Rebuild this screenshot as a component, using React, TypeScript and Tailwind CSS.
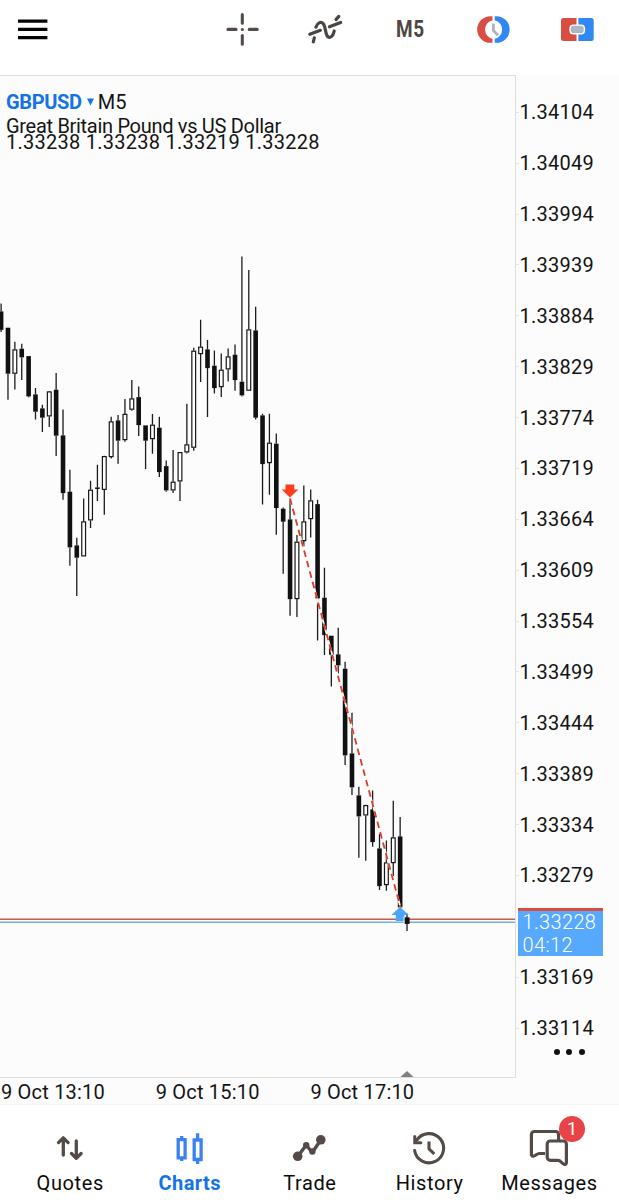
type Candle = [high: number, top: number, bottom: number, low: number, rising?: 1];

const candles: Candle[] = [
  [303, 311, 329.5, 331.5],
  [327.3, 327.3, 373.3, 399.3],
  [341.3, 349, 373.3, 389, 1],
  [343.3, 348.3, 357, 379.7],
  [355.7, 355.7, 396, 397],
  [387.7, 394, 411.3, 419],
  [404.3, 408, 417.3, 431.7],
  [390.7, 391, 416, 426.7, 1],
  [372.7, 389.3, 435.3, 455.7],
  [409, 435, 492.7, 499.3],
  [469.3, 491.3, 547, 565.3],
  [537.3, 545, 557.3, 595.7],
  [498, 521, 556, 556, 1],
  [480.3, 489.3, 520, 527.7, 1],
  [464.3, 487, 488.6, 500.7],
  [455.3, 455.7, 489.5, 514.3, 1],
  [416.3, 421, 456.7, 458, 1],
  [414.7, 420, 440.3, 463.3],
  [398.7, 413.5, 439.7, 441.3, 1],
  [379.7, 398, 409.3, 410.3, 1],
  [386, 396.7, 424.7, 435.7],
  [425, 425, 440.3, 468.7],
  [413.7, 424.3, 438.7, 453.3, 1],
  [416.3, 427.3, 471.7, 476.7],
  [460, 465.7, 490, 491.3],
  [449.7, 481.3, 490, 492.7, 1],
  [451.7, 451.7, 481, 500.7, 1],
  [403.3, 444, 452, 453, 1],
  [347.3, 350.3, 447.3, 450.3, 1],
  [319.3, 346.3, 353.7, 381.7, 1],
  [339.7, 349, 367.7, 416.7],
  [350, 365.3, 387.7, 393],
  [353, 369.3, 386.7, 396.7, 1],
  [348, 356, 369, 381, 1],
  [344, 354.3, 379.7, 390.3],
  [256, 381.3, 395, 396],
  [269.7, 329, 390.3, 390.3, 1],
  [306.3, 330, 417.3, 419],
  [413.3, 415, 463.7, 504],
  [413.3, 442.3, 462.7, 494.3, 1],
  [433, 443.3, 507.7, 534.3],
  [507, 508.3, 521.3, 573.3],
  [498, 519, 598.7, 615.3],
  [534.7, 541.3, 598.7, 616.7, 1],
  [485, 521, 540.7, 546, 1],
  [489, 500, 518.7, 537, 1],
  [499.3, 503.7, 598, 640],
  [567.3, 597.3, 634.7, 654.7],
  [635.3, 635.3, 654.3, 686],
  [627.3, 654, 665, 673],
  [661.3, 668.3, 755, 764.7],
  [712.3, 753, 787, 794.7],
  [786.3, 795, 816, 857.3],
  [804.3, 804.7, 815, 860.3, 1],
  [790, 809, 841.7, 846.3],
  [833.3, 848, 885.7, 889.7],
  [840, 862, 884.7, 890.3, 1],
  [800.3, 837, 862.7, 875.7, 1],
  [816.7, 836, 907, 907],
  [913, 917.3, 923.3, 930.7],
];

const prices = [
  "1.34104", "1.34049", "1.33994", "1.33939", "1.33884", "1.33829", "1.33774",
  "1.33719", "1.33664", "1.33609", "1.33554", "1.33499", "1.33444", "1.33389",
  "1.33334", "1.33279", "", "1.33169", "1.33114",
];

function CandleShape({ candle, index }: { candle: Candle; index: number }) {
  const [high, top, bottom, low, rising] = candle;
  const x = 1.1 + index * 6.88;
  return (
    <g>
      <path d={`M${x} ${high}V${top}M${x} ${bottom}V${low}`} stroke="#1c1c1c" strokeWidth="1.3" />
      {rising ? (
        <rect x={x - 1.9} y={top + 0.5} width="3.8" height={bottom - top - 1} fill="#fff" stroke="#161616" strokeWidth="1.2" />
      ) : (
        <rect x={x - 2.3} y={top} width="4.6" height={bottom - top} fill="#111" />
      )}
    </g>
  );
}

function Chart() {
  return (
    <svg className="block h-full w-full" viewBox="0 75.6 515 1001">
      {candles.map((c, i) => (
        <CandleShape key={i} candle={c} index={i} />
      ))}
      <path d="M0 918.9H515" stroke="#cb5a4a" strokeWidth="1.5" />
      <path d="M0 921.9H515" stroke="#6fb3dc" strokeWidth="1.5" />
      <path d="M290 498L400.5 907" stroke="#fcfcfc" strokeWidth="1.8" />
      <path d="M290 498L400.5 907" stroke="#dc3b26" strokeWidth="1.8" strokeDasharray="6.6 4.2" />
      <path d="M285.5 484h8.8v5h4.2l-8.6 8-8.2-8h3.8z" fill="#fb3e20" />
      <path d="M400 906.5l8.8 8.2h-4.4v5.8h-8.6v-5.8h-4.4z" fill="#4ba6fb" />
      <rect x="403.6" y="916.4" width="1.2" height="7" fill="#fcfcfc" />
      <rect x="404.7" y="917" width="4.8" height="6.4" fill="#111" />
      <path d="M400 1077l7-6.3 7 6.3z" fill="#808080" />
    </svg>
  );
}

function Toolbar() {
  return (
    <header className="flex h-[75px] shrink-0 items-start bg-white pl-[18px]">
      <svg className="mt-[15px] h-7 w-[30px]" viewBox="0 0 30 28">
        <path d="M0 6.2h29.4M0 14.4h29.4M0 22.6h29.4" stroke="#050505" strokeWidth="3.3" />
      </svg>
      <svg className="ml-[176px] mt-[10px] h-10 w-10" viewBox="0 0 40 40" fill="none" stroke="#544c49" strokeWidth="3.1" strokeLinecap="round">
        <path d="M18.3 4.6v8.6M18.3 25.6v8.6M4 19.4h8M25.2 19.4h8" />
        <circle cx="18.3" cy="19.4" r="1.5" fill="#544c49" stroke="none" />
      </svg>
      <svg className="ml-[42px] mt-[10px] h-10 w-10" viewBox="306 10 40 40" fill="none" stroke="#4b4542" strokeWidth="3.2" strokeLinecap="round" strokeLinejoin="round">
        <path d="M309.8 34.3L320.4 30.3M313.3 41.8L314.3 37.8M315.9 27.2C317.3 22.9 321.2 20.3 323.8 24.4C326 28.4 325.2 36 328.6 37.2C331.6 37.8 333.4 34.5 334.2 31M329.4 26.8L340.7 22.5M336 19.6L338.8 16.4" />
      </svg>
      <span className="ml-[49.5px] mt-[14px] block w-8 origin-left scale-x-[0.79] font-[Roboto,sans-serif] text-[24px] leading-[30px] font-bold tracking-[0.8px] text-[#4d4643]">M5</span>
      <svg className="ml-[48.5px] mt-[12px] h-[34px] w-[36px]" viewBox="476 12 36 34" fill="none">
        <path d="M492.5 16.2h-2a13.3 13.3 0 0 0 0 26.6h2v-4.1a9.4 9.4 0 0 1 0-18.4z" fill="#d94e42" />
        <path d="M494.7 16.2h1.7a13.3 13.3 0 0 1 0 26.6h-1.7v-4.1a9.4 9.4 0 0 0 0-18.4z" fill="#3188f2" />
        <path d="M493.4 23.5v7l4.6 4.8" stroke="#a9b8c4" strokeWidth="2.9" />
      </svg>
      <svg className="ml-[46px] mt-[12px] h-[34px] w-[40px]" viewBox="558 12 40 34">
        <path d="M563.5 18h13v23h-13a2.5 2.5 0 0 1-2.5-2.5v-18a2.5 2.5 0 0 1 2.5-2.5z" fill="#d94e42" />
        <path d="M578.4 18h12.8a2.5 2.5 0 0 1 2.5 2.5v18a2.5 2.5 0 0 1-2.5 2.5h-12.8z" fill="#3188f2" />
        <rect x="569.4" y="24.5" width="15.7" height="10" rx="4" fill="#fff" />
        <rect x="570.7" y="25.7" width="13" height="7.4" rx="2.8" fill="#aab8c4" />
      </svg>
    </header>
  );
}

function QuotesIcon() {
  return (
    <svg className="h-10 w-11" viewBox="48 1128 44 40" fill="none" stroke="#544b48" strokeWidth="3.3" strokeLinecap="round" strokeLinejoin="round">
      <path d="M63.3 1155v-16M58.5 1142.6l4.8-4.8 4.8 4.8M76.3 1141v16.5M71.5 1153.5l4.8 4.8 4.8-4.8" />
    </svg>
  );
}

function ChartsIcon() {
  return (
    <svg className="h-10 w-11" viewBox="168.2 1128 44 40" fill="none" stroke="#3b82f0" strokeWidth="3.3">
      <path d="M178.4 1139.7h6.9v18.2h-6.9zM194.4 1140h6.9v19.5h-6.9zM181.9 1136v3M181.9 1158v3M197.8 1133.2v6M197.8 1160v4" />
    </svg>
  );
}

function TradeIcon() {
  return (
    <svg className="h-10 w-11" viewBox="287.2 1128 44 40" fill="#544b48" stroke="#544b48" strokeWidth="3.4" strokeLinejoin="round">
      <path d="M298 1156.4l8.4-11.4 6 7.5 8.6-12.5" fill="none" />
      <circle cx="297.9" cy="1156.3" r="4.8" stroke="none" />
      <circle cx="306.4" cy="1145.2" r="3.2" stroke="none" />
      <circle cx="312.6" cy="1151.5" r="3.2" stroke="none" />
      <circle cx="321" cy="1139.8" r="4.8" stroke="none" />
    </svg>
  );
}

function HistoryIcon() {
  return (
    <svg className="h-10 w-11" viewBox="407 1128 44 40" fill="none" stroke="#544b48" strokeWidth="3.1" strokeLinecap="round" strokeLinejoin="round">
      <path d="M416.8 1140.2a14.6 14.6 0 1 1-2.2 10.3" />
      <path d="M414.8 1136.5v6.3h6" strokeLinejoin="miter" />
      <path d="M429 1141.5v7.3l5.3 5.2" strokeLinecap="butt" />
    </svg>
  );
}

function MessagesIcon() {
  return (
    <div className="relative h-10 w-11">
      <svg className="h-10 w-11" viewBox="527 1128 44 40" fill="none" stroke="#544b48" strokeWidth="3.2" strokeLinejoin="round">
        <path d="M545 1153.5h-5.5c-3 0-4.3 3-6.5 2.7c-1.3-.2-1.6-1.2-1.6-2.2v-19.5a3 3 0 0 1 3-3h21.2a3 3 0 0 1 3 3v5.8" />
        <path d="M566.4 1144v18.5c0 1.5-1 2.2-2.4 1.7c-2.5-.8-3.2-3.9-6-3.9h-7.8a3 3 0 0 1-3-3V1144a3 3 0 0 1 3-3h13.2a3 3 0 0 1 3 3z" />
      </svg>
      <span className="absolute -top-[12.5px] left-[32px] flex h-[26px] w-[26px] items-center justify-center rounded-full bg-[#e84347] text-[18px] leading-none text-white">1</span>
    </div>
  );
}

const tabs = [
  { label: "Quotes", icon: <QuotesIcon /> },
  { label: "Charts", icon: <ChartsIcon />, active: true },
  { label: "Trade", icon: <TradeIcon /> },
  { label: "History", icon: <HistoryIcon /> },
  { label: "Messages", icon: <MessagesIcon /> },
];

export default function App() {
  return (
    <div className="flex h-[1200px] w-[619px] flex-col overflow-hidden bg-white font-[Roboto,sans-serif] text-[#141414]">
      <Toolbar />
      <main className="flex h-[1030px] shrink-0 flex-col bg-[#fcfcfc]">
        <div className="flex h-[1003px]">
          <section className="relative w-[516px] border-t border-r border-b border-[#dedede]">
            <Chart />
            <div className="absolute top-[14px] left-[6px] whitespace-nowrap">
              <div className="flex h-6 items-center text-[20px]">
                <span className="font-bold tracking-[-0.35px] text-[#1473e6]">GBPUSD</span>
                <svg className="ml-[5px] h-2 w-[7px]" viewBox="0 0 7 8">
                  <path d="M0 .6h7L3.5 7.6z" fill="#1473e6" />
                </svg>
                <span className="ml-[4px]">M5</span>
              </div>
              <div className="h-[17px] text-[20px] leading-6 tracking-[-0.3px]">Great Britain Pound vs US Dollar</div>
              <div className="text-[20px] leading-[22px] tracking-[0.26px]">1.33238 1.33238 1.33219 1.33228</div>
            </div>
          </section>
          <aside className="relative flex w-[103px] flex-col pt-[11.9px]">
            {prices.map((p, i) => (
              <div key={i} className="flex h-[50.89px] shrink-0 items-center">
                <span className="h-px w-[3px] bg-[#e6e6e6]" />
                <span className="ml-[0.5px] text-[20px] leading-6 tracking-[0.25px]">{p}</span>
              </div>
            ))}
            <div className="absolute top-[833px] left-[1.5px] h-[48px] w-[85px] border-t-[3px] border-[#d94b3c] bg-[#56a9ff] pl-[5px] text-[20px] leading-[22.5px] font-light tracking-[0.35px] text-white">
              <div>1.33228</div>
              <div>04:12</div>
            </div>
            <div className="absolute top-[974px] left-[37.5px] flex gap-[6.5px]">
              <span className="h-[6px] w-[6px] rounded-full bg-[#111]" />
              <span className="h-[6px] w-[6px] rounded-full bg-[#111]" />
              <span className="h-[6px] w-[6px] rounded-full bg-[#111]" />
            </div>
          </aside>
        </div>
        <div className="flex h-[27px] items-center border-b border-[#f3f3f3] pt-px pl-px text-[20px] tracking-[0.2px]">
          <span className="w-[154.7px]">9 Oct 13:10</span>
          <span className="w-[154.7px]">9 Oct 15:10</span>
          <span>9 Oct 17:10</span>
        </div>
      </main>
      <nav className="flex flex-1 bg-white px-[10px] pt-[23px]">
        {tabs.map((t) => (
          <div key={t.label} className="flex flex-1 flex-col items-center">
            {t.icon}
            <span
              className={
                t.active
                  ? "mt-[3px] text-[20px] leading-6 font-bold tracking-[0.4px] text-[#1473e6]"
                  : "mt-[3px] pl-[0.7px] text-[20px] leading-6 tracking-[0.6px] text-[#0c0c0c]"
              }
            >
              {t.label}
            </span>
          </div>
        ))}
      </nav>
    </div>
  );
}
